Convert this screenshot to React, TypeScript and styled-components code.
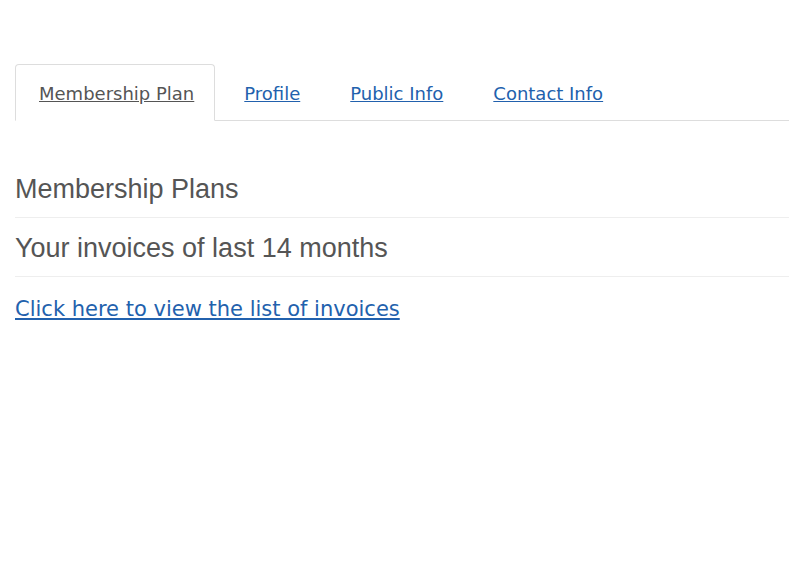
import React from "react";
import styled, { createGlobalStyle } from "styled-components";

const Global = createGlobalStyle`
  html, body { margin: 0; padding: 0; background: #fff; }
  body { font-family: "DejaVu Sans", Verdana, sans-serif; color: #555; }
`;

const Page = styled.div`
  padding: 64px 0 0 15px;
`;

const TabBar = styled.ul`
  display: flex;
  list-style: none;
  margin: 0;
  padding: 0;
  border-bottom: 1px solid #ddd;
`;

const Tab = styled.li<{ $active?: boolean }>`
  margin-bottom: -1px;
  margin-right: 5px;
  border: 1px solid ${(p) => (p.$active ? "#ddd" : "transparent")};
  border-bottom-color: ${(p) => (p.$active ? "#fff" : "transparent")};
  border-radius: 4px 4px 0 0;
  background: ${(p) => (p.$active ? "#fff" : "transparent")};
`;

const TabLink = styled.a<{ $active?: boolean }>`
  display: block;
  padding: 16px 20px 13px 23px;
  font-size: 18px;
  line-height: 26px;
  color: ${(p) => (p.$active ? "#555" : "#2261ad")};
  text-decoration: underline;
  cursor: pointer;
`;

const Section = styled.div`
  padding-top: 38px;
`;

const Heading = styled.h3`
  margin: 0;
  padding: 12px 0 10px;
  font-family: "Liberation Sans", Arial, sans-serif;
  font-weight: normal;
  font-size: 27px;
  line-height: 36px;
  color: #555;
  border-bottom: 1px solid #eee;
`;

const ListLink = styled.a`
  display: inline-block;
  margin-top: 19px;
  font-size: 21px;
  line-height: 26px;
  color: #2261ad;
  text-decoration: underline;
  cursor: pointer;
`;

const tabs = ["Membership Plan", "Profile", "Public Info", "Contact Info"];

export default function App() {
  return (
    <>
      <Global />
      <Page>
        <TabBar>
          {tabs.map((t, i) => (
            <Tab key={t} $active={i === 0}>
              <TabLink $active={i === 0}>{t}</TabLink>
            </Tab>
          ))}
        </TabBar>
        <Section>
          <Heading>Membership Plans</Heading>
          <Heading>Your invoices of last 14 months</Heading>
          <ListLink>Click here to view the list of invoices</ListLink>
        </Section>
      </Page>
    </>
  );
}
